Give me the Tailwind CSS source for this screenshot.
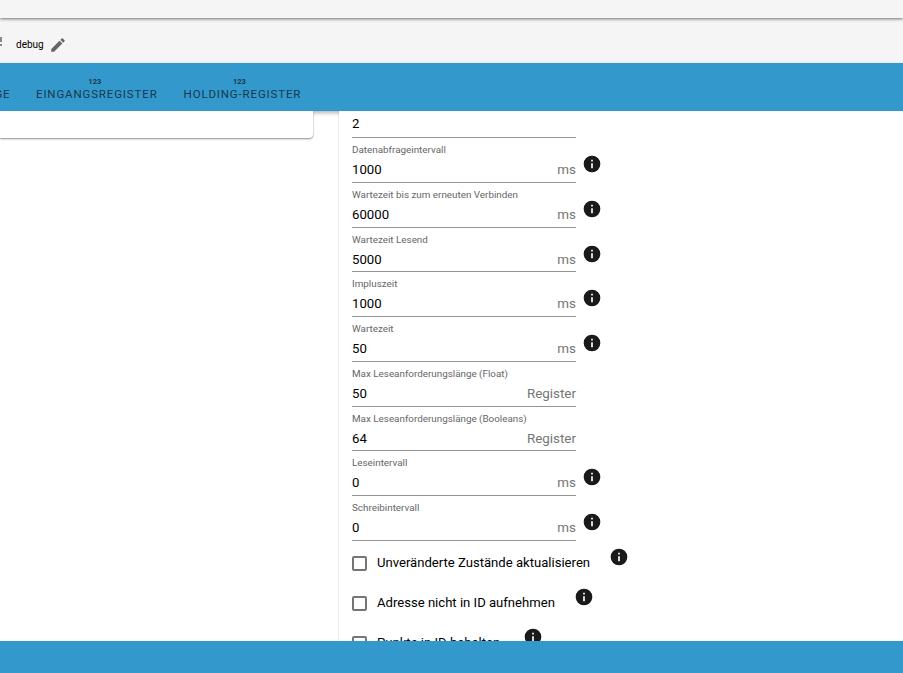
<!DOCTYPE html>
<html lang="de">
<head>
  <meta charset="UTF-8" />
  <title>Modbus</title>
  <script src="https://cdn.jsdelivr.net/npm/@tailwindcss/browser@4"></script>
</head>
<body class="h-[673px] overflow-hidden bg-white font-['Roboto',sans-serif]">
  <div class="relative flex h-[673px] w-[903px] flex-col overflow-hidden">
    <div class="relative z-10 h-[18px] shrink-0 bg-[#f5f5f5] shadow-[0_1px_3px_rgba(0,0,0,0.55)]"></div>
    <div class="flex h-[45px] shrink-0 items-center bg-[#f5f5f5] pt-[8px]">
      <svg class="-mt-[5px] h-[10px] w-[3px] shrink-0" viewBox="0 0 3 10" fill="#888"><path d="M0 0h2v5H0zM0 7h2v2H0z"/></svg>
      <span class="ml-[13px] text-[10px] text-black">debug</span>
      <svg class="ml-[5px] h-[18px] w-[18px]" viewBox="0 0 24 24" fill="#666"><path d="M3 17.25V21h3.75L17.81 9.94l-3.75-3.75L3 17.25zM20.71 7.04c.39-.39.39-1.02 0-1.41l-2.34-2.34a.996.996 0 0 0-1.41 0l-1.83 1.83 3.75 3.75 1.83-1.83z"/></svg>
    </div>
    <div class="relative z-10 flex h-[48px] shrink-0 bg-[#3399cc] text-[#17384b] shadow-[0_2px_4px_rgba(0,0,0,0.3)]">
      <div class="flex w-[10.5px] items-end justify-end pb-[10px] text-[11.5px] leading-[14px] tracking-[0.85px] whitespace-nowrap">GE</div>
      <div class="ml-[25.5px] flex flex-col items-center pt-[15px]">
        <span class="mr-[4px] text-[7.5px] leading-[8px] font-bold">123</span>
        <span class="mt-[1px] text-[11.5px] leading-[14px] tracking-[0.85px]">EINGANGSREGISTER</span>
      </div>
      <div class="ml-[26px] flex flex-col items-center pt-[15px]">
        <span class="mr-[6px] text-[7.5px] leading-[8px] font-bold">123</span>
        <span class="mt-[1px] text-[11.5px] leading-[14px] tracking-[0.85px]">HOLDING-REGISTER</span>
      </div>
    </div>
    <div class="flex min-h-0 flex-1 overflow-hidden">
      <div class="w-[339px] shrink-0 border-r border-[#eeeeee]">
        <div class="relative z-20 h-[27px] w-[313px] rounded-br-[4px] bg-white shadow-[0_1px_2px_rgba(0,0,0,0.45)]"></div>
      </div>
      <div class="relative z-20 flex flex-1 flex-col bg-white pl-[13px] text-[13.2px] text-black">
        <div class="flex h-[27px] w-[224px] items-end border-b border-[#949494] pb-[5px] leading-[16px]">2</div>

        <div class="mt-[5px] flex items-start">
          <div class="h-[40px] w-[224px] border-b border-[#949494] pt-[1px]">
            <div class="text-[9.85px] leading-[12px] text-[#666666]">Datenabfrageintervall</div>
            <div class="mt-[5px] flex items-end justify-between leading-[18px]"><span>1000</span><span class="text-[13.4px] text-[#757575]">ms</span></div>
          </div>
          <svg class="mt-[11px] ml-[6px] h-[20px] w-[20px]" viewBox="0 0 24 24" fill="#1a1a1a"><path d="M12 2a10 10 0 1 0 0 20 10 10 0 0 0 0-20zm1 15h-2v-6h2v6zm0-8h-2V7h2v2z"/></svg>
        </div>
        <div class="mt-[5px] flex items-start">
          <div class="h-[40px] w-[224px] border-b border-[#949494] pt-[1px]">
            <div class="text-[9.85px] leading-[12px] text-[#666666]">Wartezeit bis zum erneuten Verbinden</div>
            <div class="mt-[5px] flex items-end justify-between leading-[18px]"><span>60000</span><span class="text-[13.4px] text-[#757575]">ms</span></div>
          </div>
          <svg class="mt-[11px] ml-[6px] h-[20px] w-[20px]" viewBox="0 0 24 24" fill="#1a1a1a"><path d="M12 2a10 10 0 1 0 0 20 10 10 0 0 0 0-20zm1 15h-2v-6h2v6zm0-8h-2V7h2v2z"/></svg>
        </div>
        <div class="mt-[5px] flex items-start">
          <div class="h-[39px] w-[224px] border-b border-[#949494] pt-[1px]">
            <div class="text-[9.85px] leading-[12px] text-[#666666]">Wartezeit Lesend</div>
            <div class="mt-[5px] flex items-end justify-between leading-[18px]"><span>5000</span><span class="text-[13.4px] text-[#757575]">ms</span></div>
          </div>
          <svg class="mt-[11px] ml-[6px] h-[20px] w-[20px]" viewBox="0 0 24 24" fill="#1a1a1a"><path d="M12 2a10 10 0 1 0 0 20 10 10 0 0 0 0-20zm1 15h-2v-6h2v6zm0-8h-2V7h2v2z"/></svg>
        </div>
        <div class="mt-[5px] flex items-start">
          <div class="h-[40px] w-[224px] border-b border-[#949494] pt-[1px]">
            <div class="text-[9.85px] leading-[12px] text-[#666666]">Impluszeit</div>
            <div class="mt-[5px] flex items-end justify-between leading-[18px]"><span>1000</span><span class="text-[13.4px] text-[#757575]">ms</span></div>
          </div>
          <svg class="mt-[11px] ml-[6px] h-[20px] w-[20px]" viewBox="0 0 24 24" fill="#1a1a1a"><path d="M12 2a10 10 0 1 0 0 20 10 10 0 0 0 0-20zm1 15h-2v-6h2v6zm0-8h-2V7h2v2z"/></svg>
        </div>
        <div class="mt-[5px] flex items-start">
          <div class="h-[40px] w-[224px] border-b border-[#949494] pt-[1px]">
            <div class="text-[9.85px] leading-[12px] text-[#666666]">Wartezeit</div>
            <div class="mt-[5px] flex items-end justify-between leading-[18px]"><span>50</span><span class="text-[13.4px] text-[#757575]">ms</span></div>
          </div>
          <svg class="mt-[11px] ml-[6px] h-[20px] w-[20px]" viewBox="0 0 24 24" fill="#1a1a1a"><path d="M12 2a10 10 0 1 0 0 20 10 10 0 0 0 0-20zm1 15h-2v-6h2v6zm0-8h-2V7h2v2z"/></svg>
        </div>
        <div class="mt-[5px] h-[40px] w-[224px] border-b border-[#949494] pt-[1px]">
          <div class="text-[9.85px] leading-[12px] text-[#666666]">Max Leseanforderungslänge (Float)</div>
          <div class="mt-[5px] flex items-end justify-between leading-[18px]"><span>50</span><span class="text-[13.4px] text-[#757575]">Register</span></div>
        </div>
        <div class="mt-[5px] h-[39px] w-[224px] border-b border-[#949494] pt-[1px]">
          <div class="text-[9.85px] leading-[12px] text-[#666666]">Max Leseanforderungslänge (Booleans)</div>
          <div class="mt-[5px] flex items-end justify-between leading-[18px]"><span>64</span><span class="text-[13.4px] text-[#757575]">Register</span></div>
        </div>
        <div class="mt-[5px] flex items-start">
          <div class="h-[40px] w-[224px] border-b border-[#949494] pt-[1px]">
            <div class="text-[9.85px] leading-[12px] text-[#666666]">Leseintervall</div>
            <div class="mt-[5px] flex items-end justify-between leading-[18px]"><span>0</span><span class="text-[13.4px] text-[#757575]">ms</span></div>
          </div>
          <svg class="mt-[11px] ml-[6px] h-[20px] w-[20px]" viewBox="0 0 24 24" fill="#1a1a1a"><path d="M12 2a10 10 0 1 0 0 20 10 10 0 0 0 0-20zm1 15h-2v-6h2v6zm0-8h-2V7h2v2z"/></svg>
        </div>
        <div class="mt-[5px] flex items-start">
          <div class="h-[40px] w-[224px] border-b border-[#949494] pt-[1px]">
            <div class="text-[9.85px] leading-[12px] text-[#666666]">Schreibintervall</div>
            <div class="mt-[5px] flex items-end justify-between leading-[18px]"><span>0</span><span class="text-[13.4px] text-[#757575]">ms</span></div>
          </div>
          <svg class="mt-[11px] ml-[6px] h-[20px] w-[20px]" viewBox="0 0 24 24" fill="#1a1a1a"><path d="M12 2a10 10 0 1 0 0 20 10 10 0 0 0 0-20zm1 15h-2v-6h2v6zm0-8h-2V7h2v2z"/></svg>
        </div>

        <div class="mt-[14px] flex h-[16px] items-center">
          <span class="h-[15px] w-[15px] shrink-0 rounded-[2px] border-2 border-[#757575]"></span>
          <span class="ml-[10px] text-[13.1px] whitespace-nowrap">Unveränderte Zustände aktualisieren</span>
          <svg class="-mt-[13px] ml-[19px] h-[20px] w-[20px] shrink-0" viewBox="0 0 24 24" fill="#1a1a1a"><path d="M12 2a10 10 0 1 0 0 20 10 10 0 0 0 0-20zm1 15h-2v-6h2v6zm0-8h-2V7h2v2z"/></svg>
        </div>
        <div class="mt-[24px] flex h-[16px] items-center">
          <span class="h-[15px] w-[15px] shrink-0 rounded-[2px] border-2 border-[#757575]"></span>
          <span class="ml-[10px] text-[13.1px] whitespace-nowrap">Adresse nicht in ID aufnehmen</span>
          <svg class="-mt-[13px] ml-[19px] h-[20px] w-[20px] shrink-0" viewBox="0 0 24 24" fill="#1a1a1a"><path d="M12 2a10 10 0 1 0 0 20 10 10 0 0 0 0-20zm1 15h-2v-6h2v6zm0-8h-2V7h2v2z"/></svg>
        </div>
        <div class="mt-[24px] flex h-[16px] items-center">
          <span class="h-[15px] w-[15px] shrink-0 rounded-[2px] border-2 border-[#757575]"></span>
          <span class="ml-[10px] text-[13.1px] whitespace-nowrap">Punkte in ID behalten</span>
          <svg class="-mt-[13px] ml-[23px] h-[20px] w-[20px] shrink-0" viewBox="0 0 24 24" fill="#1a1a1a"><path d="M12 2a10 10 0 1 0 0 20 10 10 0 0 0 0-20zm1 15h-2v-6h2v6zm0-8h-2V7h2v2z"/></svg>
        </div>
      </div>
    </div>
    <div class="absolute right-0 bottom-0 left-0 z-30 h-[32px] bg-[#3399cc]"></div>
  </div>
</body>
</html>
